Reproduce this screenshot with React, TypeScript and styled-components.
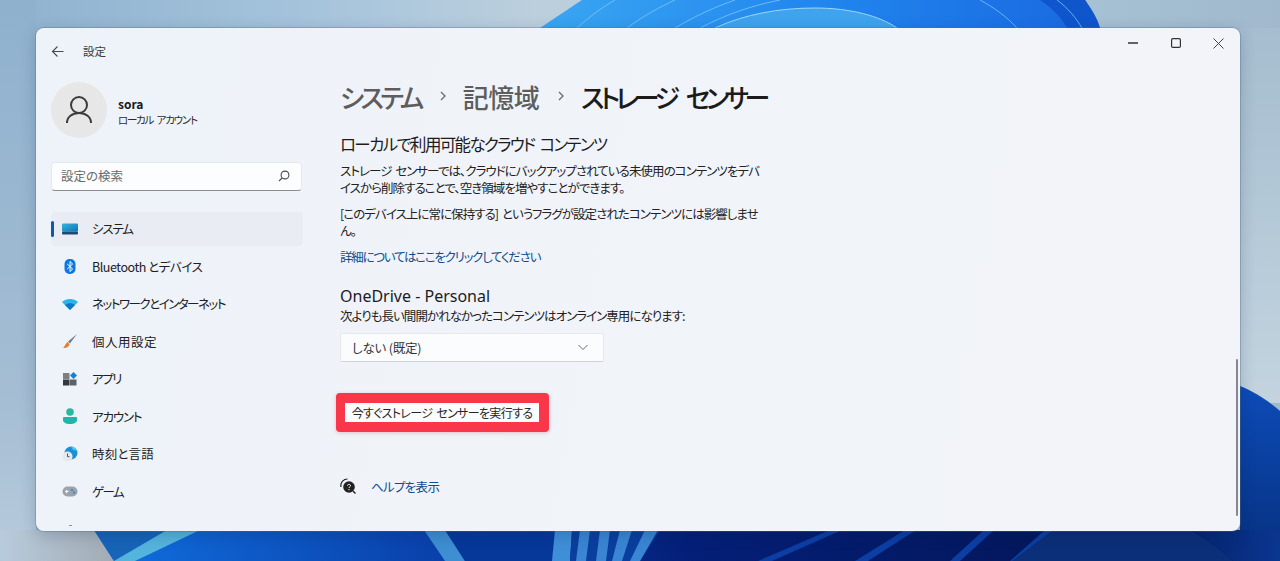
import React from "react";
import styled, { createGlobalStyle } from "styled-components";

const Global = createGlobalStyle`
  html, body { margin: 0; padding: 0; width: 1280px; height: 561px; overflow: hidden; }
  body { font-family: "Noto Sans CJK JP", "Noto Sans", sans-serif; font-feature-settings: "palt"; }
  * { box-sizing: border-box; }
`;

const Desktop = styled.div`
  position: relative;
  width: 1280px;
  height: 561px;
  overflow: hidden;
  padding: 28px 40px 31px 36px;
  background: #a5c1d8;
`;
const Wallpaper = styled.svg`
  position: absolute;
  inset: 0;
  width: 1280px;
  height: 561px;
`;
const Win = styled.div`
  position: relative;
  height: 503px;
  display: grid;
  grid-template-columns: 266px 1fr;
  background: linear-gradient(100deg, #eef3f9 0%, #f1f4f9 60%, #f2f4f9 100%);
  border-radius: 8px;
  overflow: hidden;
  box-shadow: 0 0 0 1px rgba(90, 110, 130, 0.35), 0 4px 16px rgba(0, 30, 70, 0.22);
`;
const Side = styled.aside`
  display: flex;
  flex-direction: column;
  padding: 14px 0 0 15px;
  min-width: 0;
`;
const TitleBar = styled.div`
  display: flex;
  align-items: center;
  height: 18px;
  gap: 19px;
  font-size: 11.5px;
  color: #3c3c3c;
`;
const Profile = styled.div`
  display: flex;
  align-items: center;
  gap: 11px;
  margin-top: 22px;
`;
const Avatar = styled.div`
  width: 56px;
  height: 56px;
  border-radius: 50%;
  background: #e7e7e7;
  display: flex;
  align-items: center;
  justify-content: center;
`;
const ProfileText = styled.div`
  display: flex;
  flex-direction: column;
  padding-top: 2px;
`;
const UserName = styled.div`
  font-size: 12px;
  line-height: 16px;
  font-weight: 700;
  color: #1a1a1a;
`;
const UserKind = styled.div`
  font-size: 10.5px;
  line-height: 15px;
  letter-spacing: -1.25px;
  word-spacing: 2.5px;
  color: #2c2c2c;
`;
const Search = styled.div`
  display: flex;
  align-items: center;
  justify-content: space-between;
  width: 251px;
  height: 29px;
  margin-top: 24px;
  padding: 0 11px 2px 9px;
  background: #fcfdfe;
  border-radius: 4px;
  border: 1px solid #e6e8ec;
  border-bottom: 1px solid #8d8d8d;
  font-size: 12.5px;
  color: #6a6a6a;
`;
const Nav = styled.nav`
  display: grid;
  grid-auto-rows: 37.5px;
  margin-top: 20.5px;
  width: 252px;
`;
const NavItem = styled.div<{ $active?: boolean; $track?: number }>`
  position: relative;
  display: flex;
  align-items: center;
  height: 34px;
  gap: 14px;
  padding-left: 11px;
  border-radius: 4px;
  font-size: 12.5px;
  letter-spacing: ${(p) => p.$track ?? 0}px;
  color: #202020;
  background: ${(p) => (p.$active ? "#e9edf3" : "transparent")};
`;
const Marker = styled.span`
  position: absolute;
  left: 0;
  top: 9px;
  width: 3px;
  height: 16px;
  border-radius: 2px;
  background: #0b5cab;
`;
const IconSlot = styled.span`
  display: flex;
  width: 16px;
  height: 16px;
  flex: none;
  align-items: center;
  justify-content: center;
`;
const Main = styled.main`
  display: flex;
  flex-direction: column;
  align-items: flex-start;
  padding: 51px 0 0 38px;
  min-width: 0;
`;
const Crumbs = styled.h1`
  display: flex;
  align-items: center;
  margin: 0;
  height: 34px;
  font-size: 26px;
  font-weight: 500;
  color: #5d5d5d;
  gap: 15px;
  white-space: nowrap;
`;
const Crumb = styled.span<{ $track?: number; $current?: boolean }>`
  letter-spacing: ${(p) => p.$track ?? 0}px;
  word-spacing: ${(p) => (p.$current ? 9 : 0)}px;
  color: ${(p) => (p.$current ? "#1b1b1b" : "#5d5d5d")};
`;
const Heading = styled.h2`
  margin: 19px 0 0;
  font-size: 16.5px;
  line-height: 24px;
  font-weight: 400;
  letter-spacing: -1.65px;
  word-spacing: 3px;
  color: #1c1c1c;
`;
const Para = styled.p<{ $gap: number }>`
  width: 428px;
  margin: ${(p) => p.$gap}px 0 0;
  font-size: 12.5px;
  line-height: 16.5px;
  letter-spacing: -0.95px;
  word-spacing: 2px;
  color: #222;
`;
const Link = styled.a`
  margin-top: 8.5px;
  font-size: 12.5px;
  line-height: 17px;
  letter-spacing: -1.25px;
  color: #0f4c8a;
`;
const SubHeading = styled.h3`
  margin: 21px 0 0;
  font-family: "Noto Sans", sans-serif;
  font-size: 16px;
  line-height: 21px;
  font-weight: 400;
  color: #1c1c1c;
`;
const Hint = styled.div`
  font-size: 12.5px;
  line-height: 17px;
  letter-spacing: -0.97px;
  color: #222;
`;
const Select = styled.div`
  display: flex;
  align-items: center;
  justify-content: space-between;
  width: 264px;
  height: 29px;
  margin-top: 9px;
  padding: 0 14px 0 11px;
  background: #fbfcfe;
  border: 1px solid #e6e8ec;
  border-bottom-color: #d0d2d6;
  border-radius: 2px;
  font-size: 12.5px;
  letter-spacing: -0.2px;
  color: #333;
`;
const RunFrame = styled.div`
  margin: 31px 0 0 -4px;
  padding: 10px 10px 10px 9px;
  background: #f9364a;
  border-radius: 4px;
  box-shadow: 0 1px 4px rgba(180, 40, 60, 0.25);
`;
const RunButton = styled.button`
  display: block;
  width: 194px;
  height: 19px;
  padding: 0;
  border: 0;
  background: #fbfcfd;
  font-family: inherit;
  font-feature-settings: inherit;
  font-size: 12px;
  line-height: 19px;
  letter-spacing: -0.65px;
  word-spacing: 2px;
  color: #262626;
`;
const Help = styled.div`
  display: flex;
  align-items: center;
  gap: 15px;
  margin-top: 45px;
  font-size: 12.5px;
  letter-spacing: -0.7px;
  color: #0f4c8a;
`;
const Controls = styled.div`
  position: absolute;
  top: 7px;
  right: 0;
  display: flex;
`;
const Ctl = styled.span`
  display: flex;
  width: 43px;
  height: 16px;
  align-items: center;
  justify-content: center;
`;
const Scroll = styled.div`
  position: absolute;
  right: 2px;
  top: 331px;
  width: 2px;
  height: 157px;
  border-radius: 1px;
  background: #85878a;
`;

const Chevron = () => (
  <svg width="12" height="12" viewBox="0 0 12 12" fill="none" stroke="#6a6a6a" strokeWidth="1.3">
    <path d="M5 2l4 4-4 4" />
  </svg>
);

const W = () => (
  <Wallpaper viewBox="0 0 1280 561">
    <defs>
      <linearGradient id="sky" x1="0" y1="0" x2="1" y2="0">
        <stop offset="0" stopColor="#8fb2cf" />
        <stop offset="0.25" stopColor="#a6c4dc" />
        <stop offset="0.42" stopColor="#bccfdc" />
        <stop offset="0.85" stopColor="#a6c0d4" />
        <stop offset="1" stopColor="#a0b9cd" />
      </linearGradient>
      <linearGradient id="skyLow" x1="0" y1="0" x2="0" y2="1">
        <stop offset="0" stopColor="#a5bdcf" />
        <stop offset="1" stopColor="#c3d4df" />
      </linearGradient>
      <linearGradient id="leftStrip" x1="0" y1="0" x2="0" y2="1">
        <stop offset="0" stopColor="#8fb1ce" />
        <stop offset="0.7" stopColor="#a4bdd3" />
        <stop offset="1" stopColor="#b8cbdc" />
      </linearGradient>
      <linearGradient id="bloom" x1="0" y1="0" x2="1" y2="0">
        <stop offset="0" stopColor="#3aa6f2" />
        <stop offset="0.5" stopColor="#2186ee" />
        <stop offset="1" stopColor="#1a68e0" />
      </linearGradient>
      <linearGradient id="leftLow" x1="0" y1="0" x2="1" y2="0">
        <stop offset="0" stopColor="#b8cbdc" />
        <stop offset="1" stopColor="#a2abb4" />
      </linearGradient>
      <linearGradient id="floor" x1="0" y1="0" x2="1" y2="0">
        <stop offset="0" stopColor="#1070e0" />
        <stop offset="0.3" stopColor="#0a3fa8" />
        <stop offset="0.5" stopColor="#041f78" />
        <stop offset="1" stopColor="#03124a" />
      </linearGradient>
      <linearGradient id="rightSea" x1="0" y1="0" x2="0" y2="1">
        <stop offset="0" stopColor="#0d4cb8" />
        <stop offset="1" stopColor="#06307f" />
      </linearGradient>
      <linearGradient id="corner" gradientUnits="userSpaceOnUse" x1="1190" y1="0" x2="1280" y2="0">
        <stop offset="0" stopColor="#05246e" />
        <stop offset="1" stopColor="#0a3690" />
      </linearGradient>
    </defs>
    <rect width="1280" height="561" fill="url(#sky)" />
    <rect width="36" height="561" fill="url(#leftStrip)" />
    <path d="M540 28C555 18 570 8 582 0H1085C1092 10 1097 18 1100 28Z" fill="url(#bloom)" />
    <path d="M1040 0C1052 8 1062 18 1067 28H1100C1097 18 1092 10 1085 0Z" fill="#0f55cc" />
    <path d="M577 28C590 16 603 7 615 0M627 28C643 16 660 7 675 0M675 28C695 16 715 7 735 0M700 28C725 15 750 6 780 0M980 0C995 8 1008 18 1017 28M1057 0C1068 8 1076 18 1082 28" fill="none" stroke="#7cc8f6" strokeWidth="1" opacity="0.8" />
    <path d="M715 28C745 14 780 8 815 8 850 8 880 16 897 28Z" fill="#3fa3ee" />
    <path d="M715 28C745 14 780 8 815 8 850 8 880 16 897 28" fill="none" stroke="#9ad8f8" strokeWidth="1" />
    <rect x="1240" y="28" width="40" height="375" fill="url(#skyLow)" />
    <path d="M1240 386C1255 392 1270 402 1280 411V561H1240Z" fill="url(#rightSea)" />
    <rect x="0" y="530" width="115" height="31" fill="url(#leftLow)" />
    <path d="M94 530H1280V561H114Z" fill="url(#floor)" />
    <path d="M94 530H167L114 561Z" fill="#1764b8" />
    <path d="M167 530H200L135 561H114Z" fill="#55b4dc" />
    <path d="M424 530H445L465 561H445Z" fill="#3d8ed2" />
    <path d="M445 530H555L570 561H465Z" fill="#06389a" />
    <path d="M555 530H572L570 561H552Z" fill="#3f8fd8" />
    <path d="M572 530H660L640 561H570Z" fill="#0a3f9e" />
    <path d="M580 530H590L586 561H576ZM600 530H610L606 561H596ZM620 530H632L622 561H612ZM645 530H658L640 561H630Z" fill="#3a86d4" />
    <path d="M830 530H842L772 561H758ZM905 530H916L868 561H855ZM984 530H994L960 561H950ZM1045 530H1056L1022 561H1010Z" fill="#0c3ea4" />
    <path d="M1053 530H1190C1208 540 1222 550 1233 561H1012Z" fill="#0b2f78" />
    <path d="M1190 530H1280V561H1233C1222 550 1208 540 1190 530Z" fill="url(#corner)" />
  </Wallpaper>
);

export default function App() {
  return (
    <Desktop>
      <Global />
      <W />
      <Win>
        <Side>
          <TitleBar>
            <svg width="13" height="13" viewBox="0 0 13 13" fill="none" stroke="#4a4a4a" strokeWidth="1.1">
              <path d="M12.500 6.500H1.500M6.500 1.500l-5 5 5 5" />
            </svg>
            <span>設定</span>
          </TitleBar>
          <Profile>
            <Avatar>
              <svg width="28" height="30" viewBox="0 0 28 30" fill="none" stroke="#3c3c3c" strokeWidth="2">
                <circle cx="14" cy="10" r="8" />
                <path d="M2 28c0-6 5-10 12-10s12 4 12 10" />
              </svg>
            </Avatar>
            <ProfileText>
              <UserName>sora</UserName>
              <UserKind>ローカル アカウント</UserKind>
            </ProfileText>
          </Profile>
          <Search>
            <span>設定の検索</span>
            <svg width="12" height="12" viewBox="0 0 12 12" fill="none" stroke="#4a4a4a" strokeWidth="1.1">
              <circle cx="7" cy="5" r="3.900" />
              <path d="M4.200 7.800L1 11" />
            </svg>
          </Search>
          <Nav>
            <NavItem $active $track={-1.2}>
              <Marker />
              <IconSlot>
                <svg width="16" height="12" viewBox="0 0 16 12">
                  <defs>
                    <linearGradient id="sys" x1="0" y1="0" x2="1" y2="1">
                      <stop offset="0" stopColor="#2fb6dc" />
                      <stop offset="1" stopColor="#1172b8" />
                    </linearGradient>
                  </defs>
                  <rect x="0" y="0.500" width="16" height="8" rx="1" fill="url(#sys)" />
                  <rect x="0" y="8.500" width="16" height="3" rx="1" fill="#1c4a72" />
                </svg>
              </IconSlot>
              システム
            </NavItem>
            <NavItem $track={-0.45}>
              <IconSlot>
                <svg width="12" height="15" viewBox="0 0 12 15">
                  <rect width="11" height="15" x="0.500" rx="5" fill="#0d78e0" />
                  <path d="M3.200 5l5.400 5-2.600 2.500V2.500l2.600 2.500-5.400 5" fill="none" stroke="#fff" strokeWidth="1" />
                </svg>
              </IconSlot>
              Bluetooth とデバイス
            </NavItem>
            <NavItem $track={-1.5}>
              <IconSlot>
                <svg width="16" height="12" viewBox="0 0 16 12">
                  <path d="M0 4C4 0 12 0 16 4L8 12Z" fill="#2bb4ea" />
                  <path d="M3 7C6 4.500 10 4.500 13 7L8 12Z" fill="#0e78c8" />
                </svg>
              </IconSlot>
              ネットワークとインターネット
            </NavItem>
            <NavItem $track={0.5}>
              <IconSlot>
                <svg width="16" height="16" viewBox="0 0 16 16">
                  <path d="M15 1L6 8.500l2 2Z" fill="#75808a" />
                  <path d="M5.500 9l2 2C7 14 4 15.500 1 15c1.500-1 2-4 4.500-6Z" fill="#ef7a2a" />
                </svg>
              </IconSlot>
              個人用設定
            </NavItem>
            <NavItem $track={-1.5}>
              <IconSlot>
                <svg width="14" height="14" viewBox="0 0 14 14">
                  <rect x="0" y="1" width="6.500" height="6" fill="#7b8087" />
                  <rect x="0" y="7.500" width="6.500" height="6" fill="#33383e" />
                  <rect x="7" y="7.500" width="6.500" height="6" fill="#5c6168" />
                  <path d="M10.500 0L14 3.500 10.500 7 7 3.500Z" fill="#1480d8" />
                </svg>
              </IconSlot>
              アプリ
            </NavItem>
            <NavItem $track={-1.2}>
              <IconSlot>
                <svg width="14" height="16" viewBox="0 0 14 16">
                  <circle cx="7" cy="4" r="3.800" fill="#27b8a0" />
                  <path d="M1 9h12a1 1 0 0 1 1 1v2c0 2.500-3 4-7 4s-7-1.500-7-4v-2a1 1 0 0 1 1-1Z" fill="#1fb5a8" />
                </svg>
              </IconSlot>
              アカウント
            </NavItem>
            <NavItem $track={0.2}>
              <IconSlot>
                <svg width="16" height="16" viewBox="0 0 16 16">
                  <circle cx="9" cy="7" r="6.500" fill="#1a8fd8" />
                  <path d="M9 .5a6.500 6.500 0 0 1 6 4C12 5 10 3 9 .5Z" fill="#57c5e8" />
                  <circle cx="5.500" cy="10.500" r="5" fill="#e6e8ea" />
                  <path d="M5.500 7.500v3.200h2" fill="none" stroke="#3a5a78" strokeWidth="1" />
                </svg>
              </IconSlot>
              時刻と言語
            </NavItem>
            <NavItem $track={-1.6}>
              <IconSlot>
                <svg width="16" height="11" viewBox="0 0 16 11">
                  <rect width="15" height="10" x="0.500" y="0.500" rx="5" fill="#9aa3ad" />
                  <path d="M3 5.500h3.500M4.750 3.700v3.600" stroke="#fff" strokeWidth="1" />
                  <circle cx="10" cy="4" r="1" fill="#2d7fd0" />
                  <circle cx="12" cy="6.500" r="1" fill="#2d7fd0" />
                </svg>
              </IconSlot>
              ゲーム
            </NavItem>
            <NavItem>
              <IconSlot>
                <svg width="3" height="16" viewBox="0 0 3 16">
                  <rect x="0" y="4" width="3" height="1" fill="#8a8f96" />
                </svg>
              </IconSlot>
            </NavItem>
          </Nav>
        </Side>
        <Main>
          <Crumbs>
            <Crumb $track={-3.5}>システム</Crumb>
            <Chevron />
            <Crumb $track={-0.5}>記憶域</Crumb>
            <Chevron />
            <Crumb $current $track={-4.5}>ストレージ センサー</Crumb>
          </Crumbs>
          <Heading>ローカルで利用可能なクラウド コンテンツ</Heading>
          <Para $gap={7}>
            ストレージ センサーでは、クラウドにバックアップされている未使用のコンテンツをデバイスから削除することで、空き領域を増やすことができます。
          </Para>
          <Para $gap={10}>[このデバイス上に常に保持する] というフラグが設定されたコンテンツには影響しません。</Para>
          <Link>詳細についてはここをクリックしてください</Link>
          <SubHeading>OneDrive - Personal</SubHeading>
          <Hint>次よりも長い間開かれなかったコンテンツはオンライン専用になります:</Hint>
          <Select>
            <span>しない (既定)</span>
            <svg width="12" height="12" viewBox="0 0 12 12" fill="none" stroke="#6a6a6a" strokeWidth="1">
              <path d="M1.500 4l4.500 4.500L10.500 4" />
            </svg>
          </Select>
          <RunFrame>
            <RunButton>今すぐストレージ センサーを実行する</RunButton>
          </RunFrame>
          <Help>
            <svg width="16" height="16" viewBox="0 0 16 16">
              <path d="M1 9C0 4 4 1 7.500 1" fill="none" stroke="#222" strokeWidth="1.200" />
              <circle cx="9" cy="9" r="5.800" fill="#222" />
              <path d="M13 13l2.500 2.500" stroke="#222" strokeWidth="1.400" />
              <path d="M7.500 7.500C7.500 6 10.500 6 10.500 7.600 10.500 8.800 9 8.800 9 10M9 11v1.200" stroke="#fff" strokeWidth="1" fill="none" />
            </svg>
            <span>ヘルプを表示</span>
          </Help>
        </Main>
        <Controls>
          <Ctl>
            <svg width="10" height="10" viewBox="0 0 10 10">
              <path d="M0 5h10" stroke="#333" strokeWidth="1.400" />
            </svg>
          </Ctl>
          <Ctl>
            <svg width="10" height="10" viewBox="0 0 10 10" fill="none">
              <rect x="0.600" y="0.600" width="8.800" height="8.800" rx="1.200" stroke="#333" strokeWidth="1.200" />
            </svg>
          </Ctl>
          <Ctl>
            <svg width="11" height="11" viewBox="0 0 11 11">
              <path d="M.5 .5l10 10M10.500 .5l-10 10" stroke="#444" strokeWidth="1" />
            </svg>
          </Ctl>
        </Controls>
        <Scroll />
      </Win>
    </Desktop>
  );
}
